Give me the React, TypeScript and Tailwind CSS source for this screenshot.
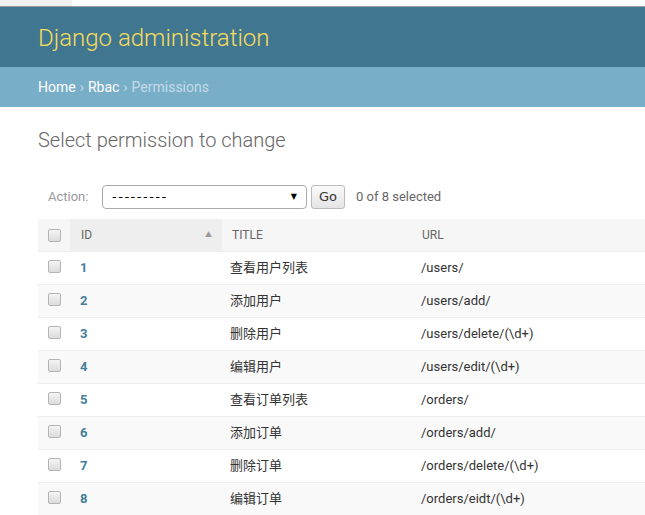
import React from "react";

const rows = [
  { id: 1, title: "查看用户列表", url: "/users/" },
  { id: 2, title: "添加用户", url: "/users/add/" },
  { id: 3, title: "删除用户", url: "/users/delete/(\\d+)" },
  { id: 4, title: "编辑用户", url: "/users/edit/(\\d+)" },
  { id: 5, title: "查看订单列表", url: "/orders/" },
  { id: 6, title: "添加订单", url: "/orders/add/" },
  { id: 7, title: "删除订单", url: "/orders/delete/(\\d+)" },
  { id: 8, title: "编辑订单", url: "/orders/eidt/(\\d+)" },
];

function Box() {
  return (
    <div className="w-[13px] h-[13px] rounded-[2px] border border-[#b4b4b4] bg-gradient-to-b from-[#f4f4f4] to-[#dcdcdc]" />
  );
}

export default function App() {
  return (
    <div
      className="w-[645px] h-[515px] overflow-hidden bg-white"
      style={{ fontFamily: 'Roboto, "Noto Sans CJK SC", "Liberation Sans", sans-serif' }}
    >
      <div className="h-[7px] bg-white border-b border-[#9a9a9a] flex">
        <div className="w-[72px] h-full bg-[#f0f0f0]" />
      </div>
      <div className="h-[60px] bg-[#417690] flex items-center pl-[38px]">
        <span className="text-[24px] font-light text-[#f5dd5d] leading-none pt-[1px]">Django administration</span>
      </div>
      <div className="h-[40px] bg-[#79aec8] flex items-center pl-[38px] text-[14px] text-white">
        <span>Home</span>
        <span className="text-[#c4dce8] mx-[4px]">›</span>
        <span>Rbac</span>
        <span className="text-[#c4dce8] mx-[4px]">›</span>
        <span className="text-[#c4dce8]">Permissions</span>
      </div>
      <div className="pl-[38px]">
        <h1 className="text-[20px] font-light text-[#666] pt-[20px] h-[70px] leading-[26px]">Select permission to change</h1>
        <div className="h-[39px] mb-[3px] flex items-center pl-[10px] text-[13px] text-[#999]">
          <span className="w-[54px]">Action:</span>
          <div
            className="w-[205px] h-[24px] border border-[#aaa] rounded-[4px] bg-white flex items-center px-[9px] text-[#000] text-[13px]"
            style={{ fontFamily: '"DejaVu Sans", sans-serif' }}
          >
            <span className="flex-1 tracking-[1.5px]">---------</span>
            <span className="text-[8px]">▼</span>
          </div>
          <div
            className="ml-[4px] w-[34px] h-[24px] border border-[#bbb] rounded-[3px] bg-gradient-to-b from-[#fafafa] to-[#e4e4e4] flex items-center justify-center text-[#333] text-[13px]"
            style={{ fontFamily: '"DejaVu Sans", sans-serif' }}
          >
            Go
          </div>
          <span className="ml-[11px] text-[#666] text-[13px]">0 of 8 selected</span>
        </div>
        <div className="w-[620px]">
          <div className="h-[33px] flex items-center bg-[#f6f6f6] text-[12px] text-[#666] uppercase border-b border-[#eee]">
            <div className="w-[32px] h-full flex items-center justify-center"><Box /></div>
            <div className="w-[152px] h-full bg-[#eee] flex items-center pl-[11px] pr-[10px]">
              <span className="flex-1">ID</span>
              <span className="text-[7px] text-[#999]">▲</span>
            </div>
            <div className="w-[190px] pl-[10px]">Title</div>
            <div className="pl-[10px]">URL</div>
          </div>
          {rows.map((r, i) => (
            <div
              key={r.id}
              className={`h-[33px] flex items-center border-b border-[#eee] text-[13px] ${i % 2 === 0 ? "bg-white" : "bg-[#f9f9f9]"}`}
            >
              <div className="w-[32px] h-full flex items-center justify-center pb-[3px]"><Box /></div>
              <div className="w-[152px] pl-[10px] font-bold text-[#447e9b]">{r.id}</div>
              <div className="w-[190px] pl-[8px] text-[#333]">{r.title}</div>
              <div className="pl-[9px] text-[#333]">{r.url}</div>
            </div>
          ))}
        </div>
      </div>
    </div>
  );
}
